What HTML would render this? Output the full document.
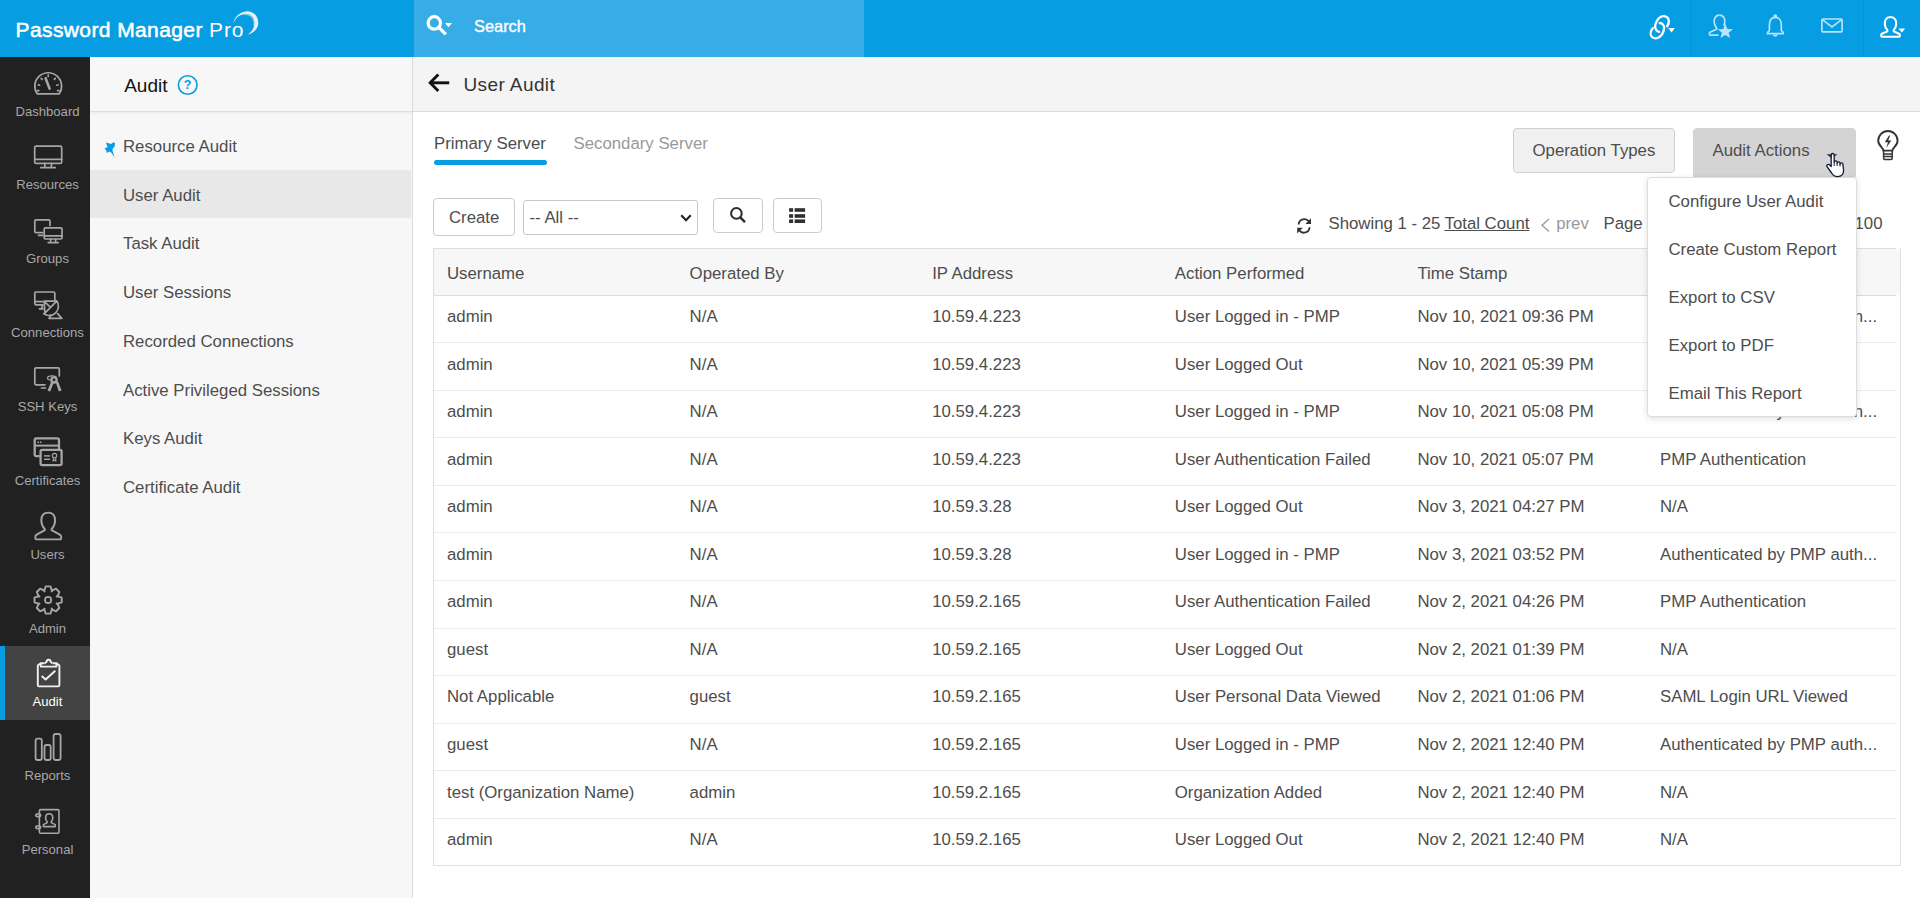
<!DOCTYPE html>
<html><head><meta charset="utf-8"><title>User Audit</title>
<style>
*{box-sizing:border-box;margin:0;padding:0}
html,body{width:1920px;height:898px;overflow:hidden;background:#fff;font-family:"Liberation Sans", sans-serif}
.a{position:absolute}
.t{position:absolute;white-space:nowrap;line-height:1}
svg{position:absolute;overflow:visible}
</style></head><body>
<div class="a" style="left:0px;top:0px;width:1920px;height:57px;background:#069de3"></div>
<div class="a" style="left:414px;top:0px;width:450px;height:57px;background:#37ade8"></div>
<div class="a" style="left:1691px;top:0px;width:1px;height:57px;background:#0890d2"></div>
<div class="a" style="left:1863px;top:0px;width:1px;height:57px;background:#0890d2"></div>
<div class="a" style="left:0px;top:57px;width:90px;height:841px;background:#212121"></div>
<div class="a" style="left:90px;top:57px;width:323px;height:841px;background:#f7f7f7"></div>
<div class="a" style="left:412px;top:57px;width:1px;height:841px;background:#dadada"></div>
<div class="a" style="left:90px;top:111px;width:322px;height:1px;background:#dcdcdc"></div>
<div class="a" style="left:90px;top:112px;width:322px;height:3px;background:linear-gradient(#ececec,#f7f7f7)"></div>
<div class="a" style="left:413px;top:57px;width:1507px;height:54px;background:#f4f4f4"></div>
<div class="a" style="left:413px;top:111px;width:1507px;height:1px;background:#dddddd"></div>
<div class="a" style="left:0px;top:646px;width:90px;height:74px;background:#434343"></div>
<div class="a" style="left:0px;top:646px;width:5px;height:74px;background:#069de3"></div>
<div class="a" style="left:90px;top:170px;width:321px;height:48px;background:#e8e8e8"></div>
<div class="t" style="left:15.50px;top:19.00px;font-size:21px;color:#fff;"><span style="-webkit-text-stroke:.55px #fff;letter-spacing:.4px">Password Manager </span><span style="letter-spacing:.9px">Pro</span></div>
<svg style="left:0;top:0" width="1920" height="898"><path fill="#fff" opacity=".88" d="M233.3 23.6 C234.6 15.4 242.6 10.8 249 11.4 C255.2 12.2 258.7 17.8 258.2 24 C257.6 29.4 253.2 33.6 247.4 34.6 C251.8 32 254.8 27.4 254.4 22.2 C254 16.6 249.6 13.4 243.6 13.9 C239 14.4 235.2 18.4 233.3 23.6 Z"/><path fill="none" stroke="#fff" stroke-width=".7" opacity=".8" d="M237.2 16.4 C241.5 13.2 248.5 13.6 252 17.6 C254.2 20.2 254.6 23.4 254 26"/></svg>
<svg style="left:0;top:0" width="1920" height="898"><g fill="none" stroke="#fff" stroke-width="2.8"><circle cx="434.3" cy="22.9" r="6.2" stroke-width="3.2"/><path d="M439 27.6 L444.6 33.2" stroke-linecap="square" stroke-width="3.4"/></g><path d="M445 23 L452 23 L448.5 27.2 Z" fill="#fff"/></svg>
<div class="t" style="left:474.00px;top:18.00px;font-size:16.4px;color:#fff;-webkit-text-stroke:.35px #fff">Search</div>
<svg style="left:0;top:0" width="1920" height="898"><g fill="none" stroke="#fff" stroke-width="2.3" stroke-linecap="round"><path d="M1667.2 26.4 C1669.4 23 1669.6 18.5 1666.3 16.8 C1662.8 15 1659.3 16.8 1657.2 20.3 C1655.3 23.6 1654.6 27.6 1656.2 30 C1657 31.1 1658 31.7 1659.1 31.9"/><path d="M1659.8 23 C1662.2 23.2 1664.3 25.2 1664.1 28.2 C1663.9 31.2 1661.6 35.3 1659.6 36.9 C1657.3 38.7 1653.4 38.9 1651.6 36.6 C1649.9 34.5 1650.6 30.9 1652.8 28.2"/></g><path d="M1668.2 28.1 L1674.8 28.1 L1671.5 32.6 Z" fill="#fff"/></svg>
<svg style="left:0;top:0" width="1920" height="898"><g fill="none" stroke="#b8e3f8" stroke-width="1.7"><path d="M1719.5 15.2 C1715.5 15.2 1714 18.5 1714.2 22 C1714.4 25 1715.6 26.8 1716.6 27.8 L1716.6 29.2 L1710 32.2 C1709 32.8 1709.3 35.2 1710.3 35.2 L1718.5 35.2"/><path d="M1719.5 15.2 C1723.5 15.2 1725 18.5 1724.8 22 C1724.7 23.5 1724.3 24.8 1723.7 25.8"/></g><path d="M1725.3 23.8 L1727.4 29 L1733 29.3 L1728.7 32.8 L1730.2 38 L1725.3 35 L1720.4 38 L1721.9 32.8 L1717.6 29.3 L1723.2 29 Z" fill="#b8e3f8"/></svg>
<svg style="left:0;top:0" width="1920" height="898"><g fill="none" stroke="#b8e3f8" stroke-width="1.7"><path d="M1775.3 17.3 C1770.6 17.3 1769.4 21.5 1769.4 25 L1769.4 30.5 L1767.6 32.3 L1767.6 33.6 L1783.1 33.6 L1783.1 32.3 L1781.3 30.5 L1781.3 25 C1781.3 21.5 1780 17.3 1775.3 17.3 Z"/><circle cx="1775.3" cy="16.2" r="1.1"/><path d="M1773.5 34.5 A1.9 1.9 0 0 0 1777.1 34.5"/></g></svg>
<svg style="left:0;top:0" width="1920" height="898"><g fill="none" stroke="#b8e3f8" stroke-width="1.7"><rect x="1821.9" y="19" width="20.2" height="12.8" rx="1"/><path d="M1822.3 19.6 L1832 27 L1841.7 19.6"/></g></svg>
<svg style="left:0;top:0" width="1920" height="898"><g fill="none" stroke="#fff" stroke-width="2.1"><path d="M1890.5 17 C1886 17 1884.6 20.6 1884.8 24.2 C1885 27.2 1886.3 29 1887.3 30 L1887.3 31.4 L1882 33.8 C1880.7 34.4 1880.9 36.8 1882 36.8 L1899 36.8 C1900.1 36.8 1900.3 34.4 1899 33.8 L1893.7 31.4 L1893.7 30 C1894.7 29 1896 27.2 1896.2 24.2 C1896.4 20.6 1895 17 1890.5 17 Z"/></g><path d="M1898.5 28.6 L1905.2 28.6 L1901.8 32.6 Z" fill="#fff"/></svg>
<div class="t" style="left:-52.50px;width:200px;text-align:center;top:105.00px;font-size:13.1px;color:#a8a8a8;">Dashboard</div>
<div class="t" style="left:-52.50px;width:200px;text-align:center;top:178.00px;font-size:13.1px;color:#a8a8a8;">Resources</div>
<div class="t" style="left:-52.50px;width:200px;text-align:center;top:252.00px;font-size:13.1px;color:#a8a8a8;">Groups</div>
<div class="t" style="left:-52.50px;width:200px;text-align:center;top:326.00px;font-size:13.1px;color:#a8a8a8;">Connections</div>
<div class="t" style="left:-52.50px;width:200px;text-align:center;top:400.00px;font-size:13.1px;color:#a8a8a8;">SSH Keys</div>
<div class="t" style="left:-52.50px;width:200px;text-align:center;top:474.00px;font-size:13.1px;color:#a8a8a8;">Certificates</div>
<div class="t" style="left:-52.50px;width:200px;text-align:center;top:548.00px;font-size:13.1px;color:#a8a8a8;">Users</div>
<div class="t" style="left:-52.50px;width:200px;text-align:center;top:622.00px;font-size:13.1px;color:#a8a8a8;">Admin</div>
<div class="t" style="left:-52.50px;width:200px;text-align:center;top:695.00px;font-size:13.1px;color:#fff;">Audit</div>
<div class="t" style="left:-52.50px;width:200px;text-align:center;top:769.00px;font-size:13.1px;color:#a8a8a8;">Reports</div>
<div class="t" style="left:-52.50px;width:200px;text-align:center;top:843.00px;font-size:13.1px;color:#a8a8a8;">Personal</div>
<svg style="left:0;top:0" width="1920" height="898"><g fill="none" stroke="#a6a6a6" stroke-width="1.7" stroke-linecap="round" stroke-linejoin="round"><path d="M37.2 93.8 A13.4 13.4 0 1 1 59.2 93.8 Z"/><path d="M45.6 78.2 L49.6 88.6" stroke-width="2.6"/><path d="M38.3 84.8 L39.6 85.2 M41.2 78.4 L42.1 79.3 M48.2 75.2 L48.2 76.5 M55.3 78.4 L54.4 79.3 M58.1 84.8 L56.8 85.2 M37.5 90.6 L38.8 90.6 M57.6 90.6 L58.9 90.6"/><rect x="34.7" y="146.2" width="27" height="17.2" rx="1.5"/><path d="M34.7 159.3 L61.7 159.3 M44.8 163.4 L44.8 166.8 M51.4 163.4 L51.4 166.8 M40.8 167.6 L55.2 167.6"/><path d="M50 225.5 L50 221 A1.2 1.2 0 0 0 48.8 219.9 L36 219.9 A1.2 1.2 0 0 0 34.8 221 L34.8 231.5 A1.2 1.2 0 0 0 36 232.7 L42.5 232.7 M38.5 235.3 L42.5 235.3"/><rect x="44.2" y="227.8" width="17.8" height="11.2" rx="1.2"/><path d="M44.2 235.9 L62 235.9 M50.6 239 L50.6 242 M55.6 239 L55.6 242 M48.2 242.6 L58.2 242.6"/><path d="M54.8 300 L54.8 293.2 A1.2 1.2 0 0 0 53.6 292 L36 292 A1.2 1.2 0 0 0 34.8 293.2 L34.8 303.6 A1.2 1.2 0 0 0 36 304.8 L43 304.8 M35 301.6 L43 301.6 M39.5 308.8 L43 308.8 M42 305 L42 308.8"/><path d="M56.7 300.8 A9.26 9.26 0 0 1 43.6 313.6 M44.2 301.2 L56.7 301.2 L44.9 313.2 Z M44.4 301.5 L50.2 307.2 M50.4 316.2 L49 318.4 L61.8 318.4 L57.6 313.6"/><path d="M59.3 376 L59.3 369 A1.2 1.2 0 0 0 58.1 367.8 L36 367.8 A1.2 1.2 0 0 0 34.8 369 L34.8 383.6 A1.2 1.2 0 0 0 36 384.8 L45 384.8 M41.5 388 L45.5 388"/></g><g fill="#a6a6a6"><circle cx="54" cy="380" r="3.8"/><path d="M51.2 381.5 L47.5 390.8 L50.2 391.6 L53.6 383 Z M55.8 382.5 L58.8 391.5 L61.6 390.6 L58 381.3 Z"/></g><ellipse cx="52" cy="378" rx="4.5" ry="2.2" fill="none" stroke="#a6a6a6" stroke-width="1.2"/><circle cx="54" cy="379.8" r="1.4" fill="#212121"/><g fill="none" stroke="#a6a6a6" stroke-width="2.3" stroke-linejoin="round"><path d="M39.8 456.2 L36.2 456.2 A1.5 1.5 0 0 1 34.7 454.7 L34.7 439.9 A1.5 1.5 0 0 1 36.2 438.4 L57.5 438.4 A1.5 1.5 0 0 1 59 439.9 L59 449.2"/><path d="M35 445.6 L59 445.6" stroke-width="2"/><rect x="40.6" y="449.8" width="21" height="15.3" rx="1.6"/></g><g fill="#a6a6a6"><rect x="37.5" y="441.5" width="1.5" height="1.5"/><rect x="40" y="441.5" width="1.5" height="1.5"/><rect x="44" y="455.2" width="6" height="1.4"/><rect x="44" y="458.6" width="6" height="1.4"/></g><circle cx="54.5" cy="455.6" r="2.2" fill="none" stroke="#a6a6a6" stroke-width="1.1"/><path d="M53.2 457.6 L53.2 461 L54.5 460 L55.8 461 L55.8 457.6" fill="none" stroke="#a6a6a6" stroke-width="1.1"/><g fill="none" stroke="#a6a6a6" stroke-width="1.9" stroke-linejoin="round"><path d="M48.2 512.6 C43.6 512.6 41.3 515.8 41.3 520.5 C41.3 524 42.8 527 44.8 529.2 L44.8 530.2 L36.3 534.8 C35 535.5 34.9 539.4 36.4 539.4 L60.2 539.4 C61.6 539.4 61.5 535.5 60.2 534.8 L51.6 530.2 L51.6 529.2 C53.6 527 55.1 524 55.1 520.5 C55.1 515.8 52.8 512.6 48.2 512.6 Z"/></g><path fill="none" stroke="#a6a6a6" stroke-width="1.9" stroke-linejoin="round" d="
M44.37 590.08 L45.77 586.40 L50.43 586.40 L51.83 590.08 L51.66 591.41 L52.47 590.34 L56.07 588.73 L59.37 592.03 L57.76 595.63 L56.69 596.44 L58.02 596.27 L61.70 597.67 L61.70 602.33 L58.02 603.73 L56.69 603.56 L57.76 604.37 L59.37 607.97 L56.07 611.27 L52.47 609.66 L51.66 608.59 L51.83 609.92 L50.43 613.60 L45.77 613.60 L44.37 609.92 L44.54 608.59 L43.73 609.66 L40.13 611.27 L36.83 607.97 L38.44 604.37 L39.51 603.56 L38.18 603.73 L34.50 602.33 L34.50 597.67 L38.18 596.27 L39.51 596.44 L38.44 595.63 L36.83 592.03 L40.13 588.73 L43.73 590.34 L44.54 591.41 Z"/>
<circle cx="48.1" cy="600" r="3.1" fill="none" stroke="#a6a6a6" stroke-width="1.8"/><g fill="none" stroke="#f0f0f0" stroke-width="1.9" stroke-linejoin="round"><path d="M44.6 663.2 L40.6 663.2 L37.8 665.4 L37.8 685.2 A1.2 1.2 0 0 0 39 686.4 L58.2 686.4 A1.2 1.2 0 0 0 59.4 685.2 L59.4 665.4 L56.6 663.2 L52.6 663.2"/><path d="M40.8 663.6 L40.8 666.6 L56.4 666.6 L56.4 663.6"/><path d="M44.8 663.4 L46.6 661.8 A2 2 0 0 1 50.6 661.8 L52.4 663.4"/><path d="M41.7 675.9 L45.6 679.4 L55.3 670.8" stroke-width="2"/></g><g fill="none" stroke="#a6a6a6" stroke-width="1.8" stroke-linejoin="round"><rect x="35.6" y="738.6" width="6.2" height="21.4" rx="2"/><rect x="44.5" y="745" width="6.2" height="15" rx="2"/><rect x="53.6" y="734" width="7" height="26" rx="2.2"/></g><g fill="none" stroke="#a6a6a6" stroke-width="1.6" stroke-linejoin="round"><rect x="39.4" y="809.6" width="19.6" height="23.6" rx="1.2"/><ellipse cx="38.2" cy="815.2" rx="2.4" ry="1.4"/><ellipse cx="38.2" cy="827.2" rx="2.4" ry="1.4"/><path d="M49.2 813.8 C46.6 813.8 45.6 815.8 45.6 818 C45.6 819.8 46.4 821 47.2 821.8 L47.2 822.6 L43.4 824.6 L43.4 826.6 L55.2 826.6 L55.2 824.6 L51.2 822.6 L51.2 821.8 C52 821 52.8 819.8 52.8 818 C52.8 815.8 51.8 813.8 49.2 813.8 Z"/></g></svg>
<div class="t" style="left:124.20px;top:76.00px;font-size:19px;color:#111;">Audit</div>
<svg style="left:0;top:0" width="1920" height="898"><circle cx="187.7" cy="85" r="9.3" fill="none" stroke="#069de3" stroke-width="1.6"/></svg>
<div class="t" style="left:87.70px;width:200px;text-align:center;top:78.67px;font-size:12.5px;color:#069de3;font-weight:bold;">?</div>
<div class="t" style="left:123.00px;top:139.00px;font-size:16.8px;color:#4d4d4d;">Resource Audit</div>
<div class="t" style="left:123.00px;top:188.00px;font-size:16.8px;color:#4d4d4d;">User Audit</div>
<div class="t" style="left:123.00px;top:236.00px;font-size:16.8px;color:#4d4d4d;">Task Audit</div>
<div class="t" style="left:123.00px;top:285.00px;font-size:16.8px;color:#4d4d4d;">User Sessions</div>
<div class="t" style="left:123.00px;top:334.00px;font-size:16.8px;color:#4d4d4d;">Recorded Connections</div>
<div class="t" style="left:123.00px;top:383.00px;font-size:16.8px;color:#4d4d4d;">Active Privileged Sessions</div>
<div class="t" style="left:123.00px;top:431.00px;font-size:16.8px;color:#4d4d4d;">Keys Audit</div>
<div class="t" style="left:123.00px;top:480.00px;font-size:16.8px;color:#4d4d4d;">Certificate Audit</div>
<svg style="left:0;top:0" width="1920" height="898"><path fill="#069de3" d="M106 142.4 L111.2 144 L113.3 142.2 L115 143.3 L114.6 146.5 L112.4 149.2 L112.8 151.8 L114.6 157.6 L111.2 152.6 L109.2 151.6 L106.8 152.9 L106.3 150.6 L104.4 148.2 L107.6 147.2 Z"/></svg>
<svg style="left:0;top:0" width="1920" height="898"><g fill="none" stroke="#111" stroke-width="2.9" stroke-linecap="butt"><path d="M449.2 82.8 L430.8 82.8"/><path d="M438.3 74.6 L430.2 82.8 L438.3 91"/></g></svg>
<div class="t" style="left:463.50px;top:75.00px;font-size:19px;color:#333;letter-spacing:.4px">User Audit</div>
<div class="t" style="left:434.00px;top:136.00px;font-size:16.8px;color:#4d4d4d;">Primary Server</div>
<div class="t" style="left:573.50px;top:136.00px;font-size:16.8px;color:#999;">Secondary Server</div>
<div class="a" style="left:434px;top:160px;width:112.6px;height:5px;background:#069de3;border-radius:2.5px"></div>
<div class="a" style="left:433px;top:198px;width:82px;height:38px;border:1px solid #cccccc;border-radius:4px;background:#fff"></div>
<div class="t" style="left:449.00px;top:210.00px;font-size:16.8px;color:#4d4d4d;">Create</div>
<div class="a" style="left:523px;top:200px;width:175px;height:35px;border:1px solid #c8c8c8;border-radius:3px;background:#fff"></div>
<div class="t" style="left:529.50px;top:210.00px;font-size:16.8px;color:#4d4d4d;">-- All --</div>
<svg style="left:0;top:0" width="1920" height="898"><path d="M681.3 215.3 L686 220.3 L690.7 215.3" fill="none" stroke="#222" stroke-width="2.1"/></svg>
<div class="a" style="left:713px;top:198px;width:50px;height:35px;border:1px solid #cccccc;border-radius:4px;background:#fff"></div>
<svg style="left:0;top:0" width="1920" height="898"><g fill="none" stroke="#2a2a2a"><circle cx="736.4" cy="213.4" r="5.3" stroke-width="2"/><path d="M740.2 217.3 L745 222.2" stroke-width="2.4"/></g></svg>
<div class="a" style="left:773px;top:198px;width:49px;height:35px;border:1px solid #cccccc;border-radius:4px;background:#fff"></div>
<svg style="left:0;top:0" width="1920" height="898"><g fill="#2e2e2e"><rect x="789.1" y="208.2" width="4" height="3.6"/><rect x="794.6" y="208.2" width="10.5" height="3.6"/><rect x="789.1" y="214.2" width="4" height="3.6"/><rect x="794.6" y="214.2" width="10.5" height="3.6"/><rect x="789.1" y="219.4" width="4" height="3.6"/><rect x="794.6" y="219.4" width="10.5" height="3.6"/></g></svg>
<div class="a" style="left:1513px;top:128px;width:162px;height:45px;border:1px solid #cfcfcf;border-radius:4px;background:#f0f0f0"></div>
<div class="t" style="left:1532.50px;top:143.00px;font-size:16.8px;color:#4d4d4d;">Operation Types</div>
<div class="a" style="left:1693px;top:128px;width:163px;height:49px;border:1px solid #d2d2d2;border-radius:4px 4px 0 0;background:#d4d4d4"></div>
<div class="t" style="left:1712.50px;top:143.00px;font-size:16.8px;color:#4d4d4d;">Audit Actions</div>
<svg style="left:0;top:0" width="1920" height="898"><path d="M1826.5 154.3 L1837.5 154.3 L1832 158.5 Z" fill="#333"/></svg>
<svg style="left:0;top:0" width="1920" height="898"><g fill="none" stroke="#333" stroke-width="1.9"><path d="M1883.4 150.6 C1883.4 148 1878.2 145.6 1878.2 140.7 A9.7 9.7 0 0 1 1897.6 140.7 C1897.6 145.6 1892.4 148 1892.4 150.6 Z"/><path d="M1883.6 151 L1883.6 158.2 A1.2 1.2 0 0 0 1884.8 159.4 L1891 159.4 A1.2 1.2 0 0 0 1892.2 158.2 L1892.2 151 M1883.6 154 L1892.2 154 M1883.6 156.5 L1892.2 156.5" stroke-width="1.5"/></g><path d="M1889 135.5 L1884.8 142.2 L1888 142.2 L1886.2 148 L1891.3 140.4 L1888.2 140.4 L1890.2 135.5 Z" fill="#333"/></svg>
<svg style="left:0;top:0" width="1920" height="898"><g fill="none" stroke="#333" stroke-width="1.8"><path d="M1298.6 224.5 A5.7 5.7 0 0 1 1309 221.6"/><path d="M1309.6 227.2 A5.7 5.7 0 0 1 1299.2 230.2"/></g><path d="M1311 218.2 L1311 224 L1305.4 224 Z M1297.2 233.6 L1297.2 227.8 L1302.8 227.8 Z" fill="#333"/></svg>
<div class="t" style="left:1328.50px;top:216.00px;font-size:16.8px;color:#4d4d4d;">Showing 1 - 25</div>
<div class="t" style="left:1444.50px;top:216.00px;font-size:16.8px;color:#4d4d4d;text-decoration:underline;text-underline-offset:1px">Total Count</div>
<svg style="left:0;top:0" width="1920" height="898"><path d="M1549 219 L1542 225.2 L1549 231.4" fill="none" stroke="#999" stroke-width="1.3"/></svg>
<div class="t" style="left:1556.20px;top:216.00px;font-size:16.8px;color:#999;">prev</div>
<div class="t" style="left:1603.50px;top:216.00px;font-size:16.8px;color:#4d4d4d;">Page 1</div>
<div class="t" style="right:37.50px;top:216.00px;font-size:16.8px;color:#4d4d4d;">100</div>
<div class="a" style="left:434px;top:249px;width:1466px;height:46px;background:#f7f7f7"></div>
<div class="a" style="left:433px;top:248px;width:1463px;height:1px;background:#dedede"></div>
<div class="a" style="left:433px;top:248px;width:1px;height:618px;background:#dedede"></div>
<div class="a" style="left:1900px;top:248px;width:1px;height:618px;background:#dedede"></div>
<div class="a" style="left:433px;top:865px;width:1468px;height:1px;background:#dedede"></div>
<div class="a" style="left:434px;top:295px;width:1462px;height:1px;background:#dcdcdc"></div>
<div class="t" style="left:447.00px;top:266.00px;font-size:16.8px;color:#4d4d4d;">Username</div>
<div class="t" style="left:689.60px;top:266.00px;font-size:16.8px;color:#4d4d4d;">Operated By</div>
<div class="t" style="left:932.20px;top:266.00px;font-size:16.8px;color:#4d4d4d;">IP Address</div>
<div class="t" style="left:1174.80px;top:266.00px;font-size:16.8px;color:#4d4d4d;">Action Performed</div>
<div class="t" style="left:1417.40px;top:266.00px;font-size:16.8px;color:#4d4d4d;">Time Stamp</div>
<div class="t" style="left:1660.00px;top:266.00px;font-size:16.8px;color:#4d4d4d;">Reason</div>
<div class="a" style="left:434px;top:342px;width:1462px;height:1px;background:#ebebeb"></div>
<div class="t" style="left:447.00px;top:309.00px;font-size:16.8px;color:#4d4d4d;">admin</div>
<div class="t" style="left:689.60px;top:309.00px;font-size:16.8px;color:#4d4d4d;">N/A</div>
<div class="t" style="left:932.20px;top:309.00px;font-size:16.8px;color:#4d4d4d;">10.59.4.223</div>
<div class="t" style="left:1174.80px;top:309.00px;font-size:16.8px;color:#4d4d4d;">User Logged in - PMP</div>
<div class="t" style="left:1417.40px;top:309.00px;font-size:16.8px;color:#4d4d4d;">Nov 10, 2021 09:36 PM</div>
<div class="t" style="left:1660.00px;top:309.00px;font-size:16.8px;color:#4d4d4d;">Authenticated by PMP auth...</div>
<div class="a" style="left:434px;top:390px;width:1462px;height:1px;background:#ebebeb"></div>
<div class="t" style="left:447.00px;top:357.00px;font-size:16.8px;color:#4d4d4d;">admin</div>
<div class="t" style="left:689.60px;top:357.00px;font-size:16.8px;color:#4d4d4d;">N/A</div>
<div class="t" style="left:932.20px;top:357.00px;font-size:16.8px;color:#4d4d4d;">10.59.4.223</div>
<div class="t" style="left:1174.80px;top:357.00px;font-size:16.8px;color:#4d4d4d;">User Logged Out</div>
<div class="t" style="left:1417.40px;top:357.00px;font-size:16.8px;color:#4d4d4d;">Nov 10, 2021 05:39 PM</div>
<div class="t" style="left:1660.00px;top:357.00px;font-size:16.8px;color:#4d4d4d;">N/A</div>
<div class="a" style="left:434px;top:437px;width:1462px;height:1px;background:#ebebeb"></div>
<div class="t" style="left:447.00px;top:404.00px;font-size:16.8px;color:#4d4d4d;">admin</div>
<div class="t" style="left:689.60px;top:404.00px;font-size:16.8px;color:#4d4d4d;">N/A</div>
<div class="t" style="left:932.20px;top:404.00px;font-size:16.8px;color:#4d4d4d;">10.59.4.223</div>
<div class="t" style="left:1174.80px;top:404.00px;font-size:16.8px;color:#4d4d4d;">User Logged in - PMP</div>
<div class="t" style="left:1417.40px;top:404.00px;font-size:16.8px;color:#4d4d4d;">Nov 10, 2021 05:08 PM</div>
<div class="t" style="left:1660.00px;top:404.00px;font-size:16.8px;color:#4d4d4d;">Authenticated by PMP auth...</div>
<div class="a" style="left:434px;top:485px;width:1462px;height:1px;background:#ebebeb"></div>
<div class="t" style="left:447.00px;top:452.00px;font-size:16.8px;color:#4d4d4d;">admin</div>
<div class="t" style="left:689.60px;top:452.00px;font-size:16.8px;color:#4d4d4d;">N/A</div>
<div class="t" style="left:932.20px;top:452.00px;font-size:16.8px;color:#4d4d4d;">10.59.4.223</div>
<div class="t" style="left:1174.80px;top:452.00px;font-size:16.8px;color:#4d4d4d;">User Authentication Failed</div>
<div class="t" style="left:1417.40px;top:452.00px;font-size:16.8px;color:#4d4d4d;">Nov 10, 2021 05:07 PM</div>
<div class="t" style="left:1660.00px;top:452.00px;font-size:16.8px;color:#4d4d4d;">PMP Authentication</div>
<div class="a" style="left:434px;top:532px;width:1462px;height:1px;background:#ebebeb"></div>
<div class="t" style="left:447.00px;top:499.00px;font-size:16.8px;color:#4d4d4d;">admin</div>
<div class="t" style="left:689.60px;top:499.00px;font-size:16.8px;color:#4d4d4d;">N/A</div>
<div class="t" style="left:932.20px;top:499.00px;font-size:16.8px;color:#4d4d4d;">10.59.3.28</div>
<div class="t" style="left:1174.80px;top:499.00px;font-size:16.8px;color:#4d4d4d;">User Logged Out</div>
<div class="t" style="left:1417.40px;top:499.00px;font-size:16.8px;color:#4d4d4d;">Nov 3, 2021 04:27 PM</div>
<div class="t" style="left:1660.00px;top:499.00px;font-size:16.8px;color:#4d4d4d;">N/A</div>
<div class="a" style="left:434px;top:580px;width:1462px;height:1px;background:#ebebeb"></div>
<div class="t" style="left:447.00px;top:547.00px;font-size:16.8px;color:#4d4d4d;">admin</div>
<div class="t" style="left:689.60px;top:547.00px;font-size:16.8px;color:#4d4d4d;">N/A</div>
<div class="t" style="left:932.20px;top:547.00px;font-size:16.8px;color:#4d4d4d;">10.59.3.28</div>
<div class="t" style="left:1174.80px;top:547.00px;font-size:16.8px;color:#4d4d4d;">User Logged in - PMP</div>
<div class="t" style="left:1417.40px;top:547.00px;font-size:16.8px;color:#4d4d4d;">Nov 3, 2021 03:52 PM</div>
<div class="t" style="left:1660.00px;top:547.00px;font-size:16.8px;color:#4d4d4d;">Authenticated by PMP auth...</div>
<div class="a" style="left:434px;top:628px;width:1462px;height:1px;background:#ebebeb"></div>
<div class="t" style="left:447.00px;top:594.00px;font-size:16.8px;color:#4d4d4d;">admin</div>
<div class="t" style="left:689.60px;top:594.00px;font-size:16.8px;color:#4d4d4d;">N/A</div>
<div class="t" style="left:932.20px;top:594.00px;font-size:16.8px;color:#4d4d4d;">10.59.2.165</div>
<div class="t" style="left:1174.80px;top:594.00px;font-size:16.8px;color:#4d4d4d;">User Authentication Failed</div>
<div class="t" style="left:1417.40px;top:594.00px;font-size:16.8px;color:#4d4d4d;">Nov 2, 2021 04:26 PM</div>
<div class="t" style="left:1660.00px;top:594.00px;font-size:16.8px;color:#4d4d4d;">PMP Authentication</div>
<div class="a" style="left:434px;top:675px;width:1462px;height:1px;background:#ebebeb"></div>
<div class="t" style="left:447.00px;top:642.00px;font-size:16.8px;color:#4d4d4d;">guest</div>
<div class="t" style="left:689.60px;top:642.00px;font-size:16.8px;color:#4d4d4d;">N/A</div>
<div class="t" style="left:932.20px;top:642.00px;font-size:16.8px;color:#4d4d4d;">10.59.2.165</div>
<div class="t" style="left:1174.80px;top:642.00px;font-size:16.8px;color:#4d4d4d;">User Logged Out</div>
<div class="t" style="left:1417.40px;top:642.00px;font-size:16.8px;color:#4d4d4d;">Nov 2, 2021 01:39 PM</div>
<div class="t" style="left:1660.00px;top:642.00px;font-size:16.8px;color:#4d4d4d;">N/A</div>
<div class="a" style="left:434px;top:723px;width:1462px;height:1px;background:#ebebeb"></div>
<div class="t" style="left:447.00px;top:689.00px;font-size:16.8px;color:#4d4d4d;">Not Applicable</div>
<div class="t" style="left:689.60px;top:689.00px;font-size:16.8px;color:#4d4d4d;">guest</div>
<div class="t" style="left:932.20px;top:689.00px;font-size:16.8px;color:#4d4d4d;">10.59.2.165</div>
<div class="t" style="left:1174.80px;top:689.00px;font-size:16.8px;color:#4d4d4d;">User Personal Data Viewed</div>
<div class="t" style="left:1417.40px;top:689.00px;font-size:16.8px;color:#4d4d4d;">Nov 2, 2021 01:06 PM</div>
<div class="t" style="left:1660.00px;top:689.00px;font-size:16.8px;color:#4d4d4d;">SAML Login URL Viewed</div>
<div class="a" style="left:434px;top:770px;width:1462px;height:1px;background:#ebebeb"></div>
<div class="t" style="left:447.00px;top:737.00px;font-size:16.8px;color:#4d4d4d;">guest</div>
<div class="t" style="left:689.60px;top:737.00px;font-size:16.8px;color:#4d4d4d;">N/A</div>
<div class="t" style="left:932.20px;top:737.00px;font-size:16.8px;color:#4d4d4d;">10.59.2.165</div>
<div class="t" style="left:1174.80px;top:737.00px;font-size:16.8px;color:#4d4d4d;">User Logged in - PMP</div>
<div class="t" style="left:1417.40px;top:737.00px;font-size:16.8px;color:#4d4d4d;">Nov 2, 2021 12:40 PM</div>
<div class="t" style="left:1660.00px;top:737.00px;font-size:16.8px;color:#4d4d4d;">Authenticated by PMP auth...</div>
<div class="a" style="left:434px;top:818px;width:1462px;height:1px;background:#ebebeb"></div>
<div class="t" style="left:447.00px;top:785.00px;font-size:16.8px;color:#4d4d4d;">test (Organization Name)</div>
<div class="t" style="left:689.60px;top:785.00px;font-size:16.8px;color:#4d4d4d;">admin</div>
<div class="t" style="left:932.20px;top:785.00px;font-size:16.8px;color:#4d4d4d;">10.59.2.165</div>
<div class="t" style="left:1174.80px;top:785.00px;font-size:16.8px;color:#4d4d4d;">Organization Added</div>
<div class="t" style="left:1417.40px;top:785.00px;font-size:16.8px;color:#4d4d4d;">Nov 2, 2021 12:40 PM</div>
<div class="t" style="left:1660.00px;top:785.00px;font-size:16.8px;color:#4d4d4d;">N/A</div>
<div class="t" style="left:447.00px;top:832.00px;font-size:16.8px;color:#4d4d4d;">admin</div>
<div class="t" style="left:689.60px;top:832.00px;font-size:16.8px;color:#4d4d4d;">N/A</div>
<div class="t" style="left:932.20px;top:832.00px;font-size:16.8px;color:#4d4d4d;">10.59.2.165</div>
<div class="t" style="left:1174.80px;top:832.00px;font-size:16.8px;color:#4d4d4d;">User Logged Out</div>
<div class="t" style="left:1417.40px;top:832.00px;font-size:16.8px;color:#4d4d4d;">Nov 2, 2021 12:40 PM</div>
<div class="t" style="left:1660.00px;top:832.00px;font-size:16.8px;color:#4d4d4d;">N/A</div>
<div class="a" style="left:1647px;top:177px;width:210px;height:240px;background:#fff;border:1px solid #dddddd;border-radius:4px;box-shadow:0 2px 6px rgba(0,0,0,.12)"></div>
<div class="t" style="left:1668.50px;top:194.00px;font-size:16.8px;color:#4d4d4d;">Configure User Audit</div>
<div class="t" style="left:1668.50px;top:242.00px;font-size:16.8px;color:#4d4d4d;">Create Custom Report</div>
<div class="t" style="left:1668.50px;top:290.00px;font-size:16.8px;color:#4d4d4d;">Export to CSV</div>
<div class="t" style="left:1668.50px;top:338.00px;font-size:16.8px;color:#4d4d4d;">Export to PDF</div>
<div class="t" style="left:1668.50px;top:386.00px;font-size:16.8px;color:#4d4d4d;">Email This Report</div>
<svg style="left:0;top:0" width="1920" height="898"><path fill="#fff" stroke="#141a33" stroke-width="1.3" stroke-linejoin="round" d="M1831.2 155 A1.5 1.5 0 0 1 1834.2 155 L1834.2 162.4 A1.45 1.45 0 0 1 1837.1 162.4 L1837.1 163.4 A1.45 1.45 0 0 1 1840 163.4 L1840 164.4 A1.45 1.45 0 0 1 1842.9 164.4 L1843.6 170 C1843.6 174 1841.5 176.6 1837.6 176.6 C1834.3 176.6 1833.2 175.6 1831.6 173 L1827 166.6 C1826 165.2 1828 163.6 1829.4 164.8 L1831.2 166.5 Z"/><path d="M1834.2 162.6 L1834.2 166 M1837.1 163.5 L1837.1 166 M1840 164.4 L1840 166.4" stroke="#141a33" stroke-width="1" fill="none"/></svg>
</body></html>
